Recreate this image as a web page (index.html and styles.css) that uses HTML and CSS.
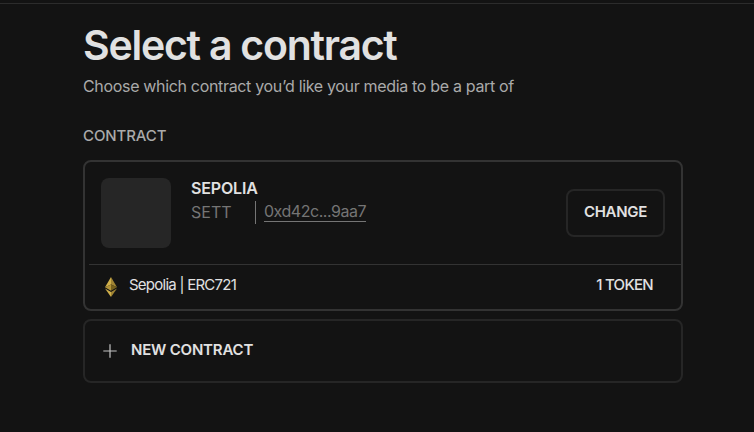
FILE: index.html
```
<!DOCTYPE html>
<html lang="en">
  <head>
    <meta charset="UTF-8">
    <meta name="viewport" content="width=device-width, initial-scale=1.0">
    <title>Select a contract</title>
    <link rel="stylesheet" href="styles.css">
  </head>
  <body>
    <header class="topbar"></header>
    <main class="container">
      <h1>Select a contract</h1>
      <p class="subtitle">Choose which contract you’d like your media to be a part of</p>
      <h2>CONTRACT</h2>

      <div class="card">
        <div class="card-main">
          <div class="thumb"></div>
          <div class="info">
            <div class="name">SEPOLIA</div>
            <div class="meta">
              <span class="symbol">SETT</span>
              <span class="address"><a href="#">0xd42c...9aa7</a></span>
            </div>
          </div>
          <button class="change">CHANGE</button>
        </div>
        <div class="card-footer">
          <svg class="eth" width="12" height="20" viewBox="0 0 12 20">
            <path fill="#d0b04b" d="M6 0L0 10.2l6-2.7z"/>
            <path fill="#a08433" d="M6 0l6 10.2-6-2.7z"/>
            <path fill="#b3943a" d="M0 10.2l6-2.7v6.3z"/>
            <path fill="#76601d" d="M12 10.2L6 7.500v6.300z"/>
            <path fill="#d0b04b" d="M0 11.500l6 3.600V20z"/>
            <path fill="#a08433" d="M12 11.500l-6 3.600V20z"/>
          </svg>
          <span class="network">Sepolia | ERC721</span>
          <span class="tokens">1 TOKEN</span>
        </div>
      </div>

      <div class="new-contract">
        <svg class="plus" width="14" height="14" viewBox="0 0 14 14">
          <path stroke="#c4c4c4" stroke-width="1.200" d="M7 .3v13.400M.3 7h13.400"/>
        </svg>
        <span class="new-label">NEW CONTRACT</span>
      </div>
    </main>
  </body>
</html>
```
FILE: styles.css
```
* {
    box-sizing: border-box;
}
body {
    margin: 0;
    font-family: Inter, "Liberation Sans", sans-serif;
    background-color: #131313;
    color: #e1e1e1;
}
.topbar {
    height: 4px;
    border-bottom: 1px solid #2c2c2c;
}
.container {
    width: 600px;
    margin-left: 83px;
}
h1 {
    margin: 0;
    padding-top: 16px;
    font-size: 41px;
    font-weight: 600;
    line-height: 50px;
    letter-spacing: -1.24px;
    white-space: nowrap;
}
.subtitle {
    margin: 6px 0 0;
    font-size: 16px;
    line-height: 20px;
    letter-spacing: -0.33px;
    color: #aaa;
    white-space: nowrap;
}
h2 {
    margin: 30px 0 0;
    font-size: 15px;
    font-weight: 500;
    line-height: 20px;
    letter-spacing: -0.1px;
    color: #aaa;
}
.card {
    height: 151px;
    margin-top: 14px;
    border: 2px solid #333;
    border-radius: 8px;
}
.card-main {
    display: flex;
    height: 102px;
    padding: 16px 16px 0;
}
.thumb {
    width: 70px;
    height: 70px;
    border-radius: 8px;
    background-color: #262626;
}
.info {
    margin-left: 20px;
}
.name {
    font-size: 16px;
    font-weight: 600;
    line-height: 20px;
    letter-spacing: -0.15px;
}
.meta {
    display: flex;
    margin-top: 3px;
    font-size: 16px;
    color: #757575;
}
.symbol {
    width: 64px;
    line-height: 23px;
    letter-spacing: 0;
}
.address {
    height: 23px;
    padding-left: 8px;
    border-left: 1px solid #757575;
}
.address a {
    display: block;
    height: 21px;
    line-height: 21px;
    border-bottom: 1px solid #757575;
    color: inherit;
    letter-spacing: -0.47px;
    text-decoration: none;
}
.change {
    width: 99px;
    height: 48px;
    margin: 11px 0 0 auto;
    padding: 0 0 3px;
    border: 2px solid #262626;
    border-radius: 8px;
    background: none;
    color: #e1e1e1;
    font-family: inherit;
    font-size: 15px;
    font-weight: 600;
    letter-spacing: -0.3px;
}
.card-footer {
    display: flex;
    margin-left: 4px;
    padding: 10px 28px 0 16px;
    border-top: 1px solid #333;
    font-size: 15px;
    line-height: 20px;
}
.eth {
    margin-top: 2px;
}
.network {
    margin-left: 12px;
    letter-spacing: -0.75px;
}
.tokens {
    margin-left: auto;
    font-weight: 500;
    letter-spacing: -0.7px;
}
.new-contract {
    display: flex;
    height: 64px;
    margin-top: 8px;
    padding: 19px 18px 0;
    border: 2px solid #262626;
    border-radius: 8px;
}
.plus {
    margin-top: 4px;
}
.new-label {
    margin-left: 14px;
    font-size: 15px;
    font-weight: 600;
    line-height: 20px;
    letter-spacing: -0.2px;
}
```
